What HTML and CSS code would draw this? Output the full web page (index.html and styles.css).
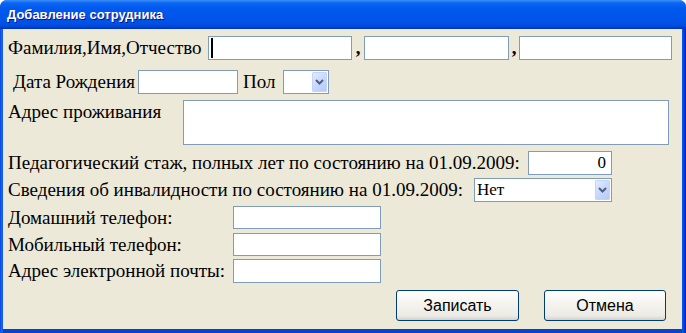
FILE: index.html
```html
<!DOCTYPE html>
<html>
<head>
    <title>Добавление сотрудника</title>
    <link rel="stylesheet" href="styles.css">
</head>
<body>
    <div class="window">
        <div class="titlebar">Добавление сотрудника</div>
        <div class="content">

            <div class="row row-fio">
                <label class="lbl lbl-fio">Фамилия,Имя,Отчество</label>
                <span class="focus-wrap">
                    <input type="text" class="field f-last">
                    <span class="caret"></span>
                </span>
                <span class="sep">,</span>
                <input type="text" class="field f-first">
                <span class="sep sep2">,</span>
                <input type="text" class="field f-middle">
            </div>

            <div class="row row-birth">
                <label class="lbl lbl-birth">Дата Рождения</label>
                <input type="text" class="field f-date">
                <label class="lbl lbl-sex">Пол</label>
                <div class="combo combo-sex">
                    <span class="combo-value"></span>
                    <span class="combo-arrow">
                        <svg width="9" height="6" viewBox="0 0 9 6"><path d="M1 1 L4.5 4.5 L8 1" fill="none" stroke="#4d6185" stroke-width="2"/></svg>
                    </span>
                </div>
            </div>

            <div class="row row-addr">
                <label class="lbl lbl-addr">Адрес проживания</label>
                <textarea class="field f-addr"></textarea>
            </div>

            <div class="row row-stage">
                <label class="lbl lbl-stage">Педагогический стаж, полных лет по состоянию на 01.09.2009:</label>
                <input type="text" class="field f-stage" value="0">
            </div>

            <div class="row row-inv">
                <label class="lbl lbl-inv">Сведения об инвалидности по состоянию на 01.09.2009:</label>
                <div class="combo combo-inv">
                    <span class="combo-value">Нет</span>
                    <span class="combo-arrow">
                        <svg width="9" height="6" viewBox="0 0 9 6"><path d="M1 1 L4.5 4.5 L8 1" fill="none" stroke="#4d6185" stroke-width="2"/></svg>
                    </span>
                </div>
            </div>

            <div class="row row-phone">
                <label class="lbl lbl-contact">Домашний телефон:</label>
                <input type="text" class="field f-contact">
            </div>

            <div class="row row-mobile">
                <label class="lbl lbl-contact">Мобильный телефон:</label>
                <input type="text" class="field f-contact">
            </div>

            <div class="row row-mail">
                <label class="lbl lbl-contact">Адрес электронной почты:</label>
                <input type="text" class="field f-contact">
            </div>

            <div class="buttons">
                <button type="button" class="btn">Записать</button>
                <button type="button" class="btn">Отмена</button>
            </div>
        </div>
    </div>
</body>
</html>
```

FILE: styles.css
```css
body {
    margin: 0;
    background-color: #fff;
    font-family: "Liberation Serif", serif;
    color: #000;
}
.window {
    width: 686px;
    height: 333px;
    display: flex;
    flex-direction: column;
    background: linear-gradient(to right, #0831d9 0, #166aee 1px, #0a5ae6 3px, #0a5ae6 682px, #0842d8 684px, #0019cf 686px);
    border-radius: 7px 7px 0 0;
    overflow: hidden;
}
.titlebar {
    height: 29px;
    padding: 1px 0 0 7px;
    box-sizing: border-box;
    line-height: 28px;
    font-family: "Liberation Sans", Arial, sans-serif;
    font-weight: bold;
    font-size: 13px;
    color: #fff;
    text-shadow: 1px 1px 0 #0f1089;
    background: linear-gradient(to bottom, #3d8ff8 0, #0a66f2 3px, #0058ee 9px, #0055ea 18px, #0050e4 24px, #0044d4 27px, #0031b8 29px);
}
.content {
    flex: 1;
    margin: 0 4px 4px 3px;
    padding: 7px 0 0 5px;
    background-color: #ece9d8;
    box-shadow: 0 4px 0 #0a42cc;
    font-size: 19px;
}
.row {
    display: flex;
    align-items: center;
    height: 24px;
}
.lbl {
    white-space: nowrap;
    flex-shrink: 0;
}
.field {
    box-sizing: border-box;
    height: 100%;
    margin: 0;
    padding: 0 3px;
    border: 1px solid #7f9db9;
    background-color: #fff;
    font-family: "Liberation Serif", serif;
    font-size: 17px;
    outline: none;
}

/* ФИО */
.lbl-fio { width: 200px; }
.focus-wrap {
    position: relative;
    height: 100%;
}
.caret {
    position: absolute;
    left: 3px;
    top: 2px;
    width: 2px;
    height: 20px;
    background-color: #000;
}
.f-last { width: 144px; }
.sep {
    width: 12px;
    text-align: center;
    font-weight: bold;
}
.sep2 { width: 10px; }
.f-first { width: 145px; }
.f-middle { width: 153px; }

/* дата рождения, пол */
.row-birth { margin-top: 10px; }
.lbl-birth {
    width: 125px;
    padding-left: 5px;
}
.f-date { width: 100px; }
.lbl-sex {
    width: 40px;
    padding-left: 5px;
}
.combo {
    box-sizing: border-box;
    height: 100%;
    display: flex;
    align-items: stretch;
    border: 1px solid #7f9db9;
    background-color: #fff;
    padding: 1px;
}
.combo-value {
    flex: 1;
    padding-left: 1px;
    line-height: 20px;
    font-size: 17px;
}
.combo-arrow {
    width: 15px;
    display: flex;
    align-items: center;
    justify-content: center;
    border-radius: 2px;
    background: linear-gradient(135deg, #e6eeff 0, #c6d6fc 55%, #b4c9f6 100%);
    box-shadow: inset 0 0 0 1px #c3d3fd;
}
.combo-sex { width: 46px; }

/* адрес */
.row-addr {
    margin-top: 6px;
    height: 45px;
    align-items: flex-start;
}
.lbl-addr {
    width: 175px;
    padding-top: 1px;
}
.f-addr {
    width: 486px;
    resize: none;
}

/* стаж, инвалидность */
.row-stage { margin-top: 6px; }
.lbl-stage { width: 520px; }
.f-stage {
    width: 84px;
    text-align: right;
    padding-right: 5px;
}
.row-inv { margin-top: 3px; }
.lbl-inv { width: 466px; }
.combo-inv { width: 138px; }

/* контакты */
.row-phone { margin-top: 4px; height: 23px; }
.row-mobile { margin-top: 4px; height: 23px; }
.row-mail { margin-top: 3px; }
.lbl-contact { width: 225px; }
.f-contact { width: 148px; }

/* кнопки */
.buttons {
    display: flex;
    justify-content: flex-end;
    gap: 25px;
    margin-top: 7px;
    padding-right: 16px;
}
.btn {
    width: 123px;
    height: 31px;
    border: 1px solid #003c74;
    border-radius: 3px;
    background: linear-gradient(to bottom, #fff 0, #f5f4ef 40%, #ecebe6 85%, #d8d2c6 100%);
    font-family: "Liberation Sans", Arial, sans-serif;
    font-size: 16px;
    color: #000;
    cursor: pointer;
}
.btn + .btn { width: 122px; }
```
